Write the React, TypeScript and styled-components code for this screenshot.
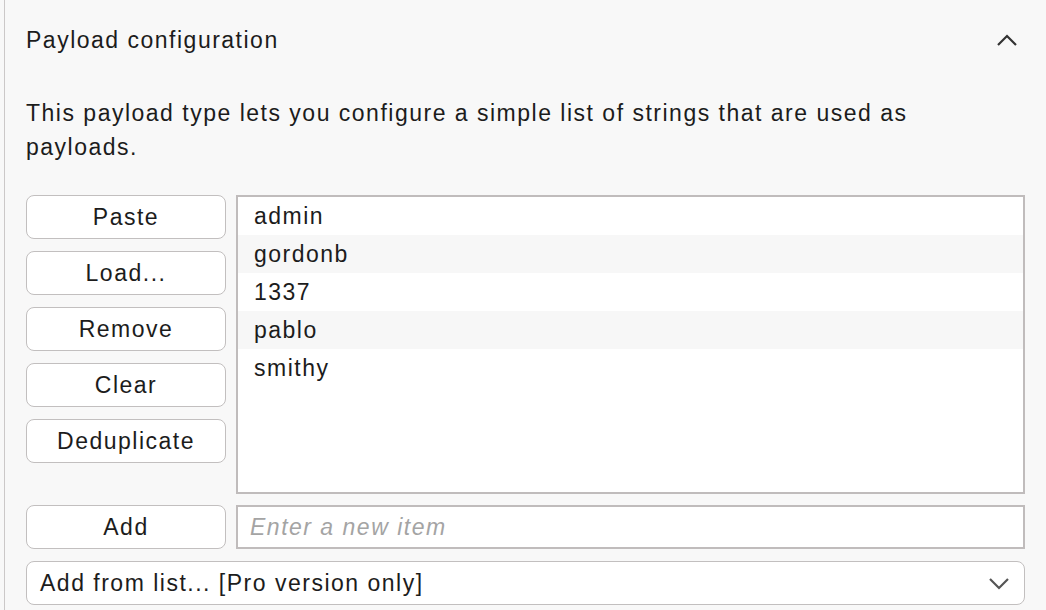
import React from 'react'
import styled, { createGlobalStyle } from 'styled-components'

const GlobalStyle = createGlobalStyle`
  html, body {
    margin: 0;
    padding: 0;
    background: #f8f8f8;
    font-family: "Liberation Sans", Arial, sans-serif;
    color: #1c1c1c;
  }
`

const Panel = styled.section`
  margin-left: 4px;
  border-left: 1px solid #cbc8c8;
  padding: 0 21px 0 21px;
  width: 999px;
  min-height: 100vh;
  background: #f8f8f8;
  font-size: 23px;
  letter-spacing: 1.5px;
`

const Header = styled.div`
  height: 80px;
  display: flex;
  align-items: center;
  justify-content: space-between;
  padding-right: 7px;
`

const Title = styled.h2`
  margin: 0;
  font-size: 23px;
  font-weight: 400;
`

const Description = styled.p`
  margin: 0 0 31px;
  line-height: 34px;
  padding-top: 16px;
`

const Main = styled.div`
  display: grid;
  grid-template-columns: 200px 1fr;
  column-gap: 10px;
  row-gap: 11px;
`

const ButtonColumn = styled.div`
  display: flex;
  flex-direction: column;
  gap: 12px;
`

const Button = styled.button`
  height: 44px;
  width: 100%;
  box-sizing: border-box;
  border: 1.5px solid #c2bfbf;
  border-radius: 8px;
  background: #fff;
  font-family: inherit;
  font-size: 23px;
  letter-spacing: inherit;
  color: #1c1c1c;
  padding: 0;
`

const List = styled.div`
  height: 299px;
  box-sizing: border-box;
  border: 2px solid #c0bcbc;
  background: #fff;
`

const Row = styled.div<{ $alt: boolean }>`
  height: 38px;
  padding-left: 16px;
  line-height: 38px;
  background: ${p => (p.$alt ? '#f7f7f7' : '#fff')};
`

const Input = styled.input`
  height: 44px;
  box-sizing: border-box;
  border: 2px solid #c0bcbc;
  background: #fff;
  font-family: inherit;
  font-size: 23px;
  letter-spacing: inherit;
  padding: 0 12px;
  outline: none;

  &::placeholder {
    color: #a4a4a4;
    font-style: italic;
  }
`

const Select = styled.div`
  margin-top: 12px;
  height: 44px;
  box-sizing: border-box;
  border: 1.5px solid #c2bfbf;
  border-radius: 8px;
  background: #fff;
  display: flex;
  align-items: center;
  justify-content: space-between;
  padding: 0 14px 0 13px;
`

const Chevron = ({ up }: { up?: boolean }) => (
  <svg width="22" height="14" viewBox="0 0 22 14">
    <path
      d={up ? 'M2 12 L11 3 L20 12' : 'M2 3 L11 12 L20 3'}
      fill="none"
      stroke={up ? '#333' : '#555'}
      strokeWidth="2.2"
    />
  </svg>
)

const items = ['admin', 'gordonb', '1337', 'pablo', 'smithy']
const actions = ['Paste', 'Load...', 'Remove', 'Clear', 'Deduplicate']

export default function App() {
  return (
    <>
      <GlobalStyle />
      <Panel>
        <Header>
          <Title>Payload configuration</Title>
          <Chevron up />
        </Header>
        <Description>
          This payload type lets you configure a simple list of strings that are used as payloads.
        </Description>
        <Main>
          <ButtonColumn>
            {actions.map(a => (
              <Button key={a}>{a}</Button>
            ))}
          </ButtonColumn>
          <List>
            {items.map((it, i) => (
              <Row key={it} $alt={i % 2 === 1}>{it}</Row>
            ))}
          </List>
          <Button>Add</Button>
          <Input placeholder="Enter a new item" />
        </Main>
        <Select>
          <span>Add from list... [Pro version only]</span>
          <Chevron />
        </Select>
      </Panel>
    </>
  )
}
